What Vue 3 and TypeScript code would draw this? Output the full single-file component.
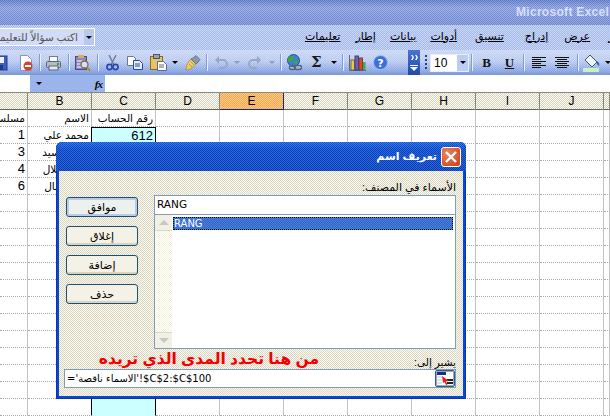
<script setup lang="ts">
const columns: string[] = ['', 'B', 'C', 'D', 'E', 'F', 'G', 'H', 'I', 'J', '']
const rows: { a: string; b: string; c: string }[] = [
  { a: 'مسلسل', b: 'الاسم', c: 'رقم الحساب' },
  { a: '1', b: 'محمد علي', c: '612' },
  { a: '3', b: 'أمين السيد', c: '' },
  { a: '4', b: 'محمد هلال', c: '' },
  { a: '6', b: 'علي جمال', c: '' },
  ...Array.from({ length: 14 }, () => ({ a: '', b: '', c: '' }))
]
const menus: { text: string; cls: string }[] = [
  { text: 'تعليمات', cls: 'm1' },
  { text: 'إطار', cls: 'm2' },
  { text: 'بيانات', cls: 'm3' },
  { text: 'أدوات', cls: 'm4' },
  { text: 'تنسيق', cls: 'm5' },
  { text: 'إدراج', cls: 'm6' },
  { text: 'عرض', cls: 'm7' },
  { text: 'تحرير', cls: 'm8' }
]
const buttons: { text: string; primary: boolean }[] = [
  { text: 'موافق', primary: true },
  { text: 'إغلاق', primary: false },
  { text: 'إضافة', primary: false },
  { text: 'حذف', primary: false }
]
</script>

<template>
  <div class="screen">
    <div class="titlebar"><span class="apptitle">Microsoft Excel</span></div>

    <div class="menubar">
      <div class="ask">
        <span class="ask-text">اكتب سؤالاً للتعليمات</span>
        <span class="ask-drop"><i class="tri"></i></span>
      </div>
      <span v-for="m in menus" :key="m.text" class="menu" :class="m.cls">{{ m.text }}</span>
    </div>

    <div class="toolbar">
      <svg class="ic save" width="16" height="16" viewBox="0 0 16 16"><rect x="1" y="1" width="14" height="14" fill="#3a5fc0" stroke="#223a80"/><rect x="4" y="2" width="8" height="6" fill="#eef"/><rect x="5" y="10" width="6" height="5" fill="#223a80"/></svg>
      <svg class="ic preview" width="14" height="18" viewBox="0 0 14 18"><path d="M1.500 1.500h7l4 4v11h-11z" fill="#fff" stroke="#8a94b0"/><circle cx="9" cy="12" r="4.500" fill="#d8402a"/><rect x="6" y="11" width="6" height="2" fill="#fff"/></svg>
      <i class="sep s1"></i>
      <svg class="ic print" width="15" height="16" viewBox="0 0 15 16"><rect x="3.500" y="1.500" width="8" height="5" fill="#fff" stroke="#707a90"/><rect x=".5" y="6.500" width="14" height="6" rx="1" fill="#b4bcc8" stroke="#5a6478"/><rect x="3" y="11" width="9" height="4" fill="#e6e8ee" stroke="#5a6478"/><rect x="11" y="8" width="2" height="2" fill="#2ab030"/></svg>
      <i class="sep s2"></i>
      <svg class="ic search" width="16" height="18" viewBox="0 0 16 18"><rect x=".5" y="2.500" width="11" height="13" fill="#8d84c4" stroke="#4c4a80"/><rect x="3" y="1" width="6" height="3" fill="#d8b048"/><path d="M2 7h8M2 10h5M2 13h5" stroke="#fff"/><circle cx="9.500" cy="10.500" r="3.500" fill="#cfe4f8" stroke="#7a6a40" stroke-width="1.300"/><path d="M12 13l3 4" stroke="#b08828" stroke-width="2"/></svg>
      <i class="sep s3"></i>
      <svg class="ic cut" width="13" height="17" viewBox="0 0 13 17"><path d="M3 1l5 10M10 1L5 11" stroke="#6f7f98" stroke-width="1.500" fill="none"/><circle cx="3.500" cy="13" r="2.600" fill="none" stroke="#2848a8" stroke-width="1.600"/><circle cx="9.500" cy="13" r="2.600" fill="none" stroke="#2848a8" stroke-width="1.600"/></svg>
      <svg class="ic copy" width="16" height="14" viewBox="0 0 16 14"><path d="M.5.500h6l2 2v7h-8z" fill="#fff" stroke="#6a7898"/><path d="M6.500 4.500h6l3 3v6h-9z" fill="#e8eefc" stroke="#2848a8"/><path d="M8 8h5M8 10h5" stroke="#2848a8"/></svg>
      <svg class="ic paste" width="18" height="17" viewBox="0 0 18 17"><rect x=".5" y="2.500" width="12" height="13" fill="#e8c468" stroke="#8a6a20"/><rect x="3.500" y=".5" width="6" height="4" fill="#9aa4b8" stroke="#555"/><path d="M7.500 7.500h6l3 3v6h-9z" fill="#fff" stroke="#5a6a8a"/><path d="M9 11h5M9 13h5" stroke="#5a6a8a"/></svg>
      <i class="tri t-paste"></i>
      <svg class="ic brush" width="16" height="16" viewBox="0 0 16 16"><path d="M1 15C1 10 3 7 6 4l5 5c-3 3-6 6-10 6z" fill="#eccb68" stroke="#a88428" stroke-width=".7"/><path d="M4 9l3 3M6 7l3 3" stroke="#a88428" stroke-width=".7"/><path d="M8 3l3-2.500 4 4L12.500 8 11 9 6 4z" fill="#8a98b0" stroke="#566" stroke-width=".7"/></svg>
      <i class="sep s4"></i>
      <svg class="ic undo" width="14" height="14" viewBox="0 0 14 14"><path d="M3 4h6a3.500 3.500 0 0 1 0 8H5" fill="none" stroke="#98a8c4" stroke-width="2"/><path d="M5 0v8L1 4z" fill="#98a8c4"/></svg>
      <i class="tri dim t-undo"></i>
      <svg class="ic redo" width="14" height="14" viewBox="0 0 14 14"><path d="M11 4H5a3.500 3.500 0 0 0 0 8h4" fill="none" stroke="#98a8c4" stroke-width="2"/><path d="M9 0v8l4-4z" fill="#98a8c4"/></svg>
      <i class="tri dim t-redo"></i>
      <i class="sep s5"></i>
      <svg class="ic globe" width="17" height="17" viewBox="0 0 17 17"><circle cx="7.500" cy="6.500" r="6" fill="#3f7ed8" stroke="#24509c"/><path d="M3 3c2-2 4-1 5 0s0 3-2 3-1 3-3 2-1-4 0-5zM9 7c2-1 4 0 3 2s-2 2-3 1z" fill="#3ca83c"/><rect x="3.500" y="11.500" width="6" height="4" rx="2" fill="none" stroke="#5a6478" stroke-width="1.400"/><rect x="8.500" y="11.500" width="7" height="4" rx="2" fill="none" stroke="#5a6478" stroke-width="1.400"/></svg>
      <span class="sigma">Σ</span>
      <i class="tri t-sigma"></i>
      <i class="sep s6"></i>
      <svg class="ic chart" width="17" height="17" viewBox="0 0 17 17"><path d="M.5 1v15.500H17" fill="none" stroke="#667"/><rect x="2" y="6" width="3.500" height="10" fill="#e8cc50" stroke="#665"/><rect x="6" y="2" width="3.500" height="14" fill="#7c58b8" stroke="#446"/><rect x="10" y="4" width="3.500" height="12" fill="#d84838" stroke="#644"/><rect x="14" y="8" width="2.500" height="8" fill="#48a848"/></svg>
      <svg class="ic help" width="15" height="15" viewBox="0 0 15 15"><circle cx="7.500" cy="7.500" r="7" fill="#3a70d8" stroke="#a8c0ec"/><text x="7.500" y="11.500" text-anchor="middle" class="qm">?</text></svg>
      <div class="gripper">
        <svg width="9" height="5" viewBox="0 0 9 5" class="chev"><path d="M1 0l1.500 2.500L1 5h1.500L4 2.500 2.500 0zM5 0l1.500 2.500L5 5h1.500L8 2.500 6.500 0z" fill="#fff"/></svg>
        <i class="bar"></i><i class="tri white"></i>
      </div>
      <i class="dots"></i>
      <div class="combo"><span class="size">10</span><span class="combo-drop"><i class="tri"></i></span></div>
      <i class="sep s7"></i>
      <span class="fmt bold">B</span>
      <span class="fmt under">U</span>
      <i class="sep s8"></i>
      <svg class="ic al1" width="14" height="11" viewBox="0 0 14 11"><path d="M0 .5h14M0 2.500h9M0 4.500h14M0 6.500h9M0 8.500h14M0 10.500h9" stroke="#111" stroke-width="1"/></svg>
      <svg class="ic al2" width="14" height="11" viewBox="0 0 14 11"><path d="M0 .5h14M2 2.500h10M0 4.500h14M2 6.500h10M0 8.500h14M2 10.500h10" stroke="#111" stroke-width="1"/></svg>
      <i class="sep s9"></i>
      <svg class="ic fill" width="17" height="18" viewBox="0 0 17 18"><path d="M7 1l7 7-5 5-7-7z" fill="#eef2fa" stroke="#456"/><path d="M14 7c2 1 3 3 2 5-2-1-3-3-2-5z" fill="#3068d0"/><rect x="0" y="14" width="16" height="4" fill="#c4f2c4"/></svg>
      <i class="tri t-fill"></i>
    </div>

    <div class="formula">
      <div class="namebox"></div>
      <div class="fxzone"><i class="tri"></i><em class="fx">fx</em></div>
    </div>

    <div class="sheet">
      <div class="head-row">
        <div v-for="(c, i) in columns" :key="i" class="head" :class="{ active: c === 'E' }">{{ c }}</div>
      </div>
      <div v-for="(r, ri) in rows" :key="ri" class="row">
        <div class="cell text" :class="{ num: ri > 0 }">{{ r.a }}</div>
        <div class="cell text">{{ r.b }}</div>
        <div class="cell text" :class="{ cyan: ri > 0, num: ri > 0, first: ri === 1 }">{{ r.c }}</div>
        <div v-for="n in 8" :key="n" class="cell"></div>
      </div>
    </div>

    <div class="dialog">
      <div class="dlg-title">
        <span class="dlg-caption">تعريف اسم</span>
        <span class="close">
          <svg width="14" height="14" viewBox="0 0 14 14"><path d="M2 2l10 10M12 2L2 12" stroke="#fff" stroke-width="2.400"/></svg>
        </span>
      </div>
      <div class="dlg-body">
        <div class="dlg-main">
          <div class="btns">
            <div v-for="b in buttons" :key="b.text" class="btn" :class="{ primary: b.primary }">{{ b.text }}</div>
          </div>
          <div class="names">
            <div class="label">الأسماء في المصنف:</div>
            <div class="input">RANG</div>
            <div class="list">
              <div class="scroll">
                <span class="sbtn"><i class="up"></i></span>
                <span class="sbtn down"><i class="dn"></i></span>
              </div>
              <div class="items"><div class="selected">RANG</div></div>
            </div>
          </div>
        </div>
        <div class="ref-row">
          <span class="note">من هنا تحدد المدى الذي تريده</span>
          <span class="ref-label">يشير إلى:</span>
        </div>
        <div class="ref-input">
          <span class="ref-text">='الاسماء ناقصة'!$C$2:$C$100</span>
          <span class="ref-btn">
            <svg width="18" height="15" viewBox="0 0 18 15"><rect x=".5" y=".5" width="17" height="14" fill="#fff" stroke="#9ab"/><rect x="1" y="1" width="9" height="3" fill="#1c2c88"/><path d="M1 6h6M1 9h5M1 12h5" stroke="#b8c4d8"/><path d="M11 9h6M11 12h6" stroke="#222" stroke-width="2"/><path d="M6 5l7 5-3 .5 1.500 3-1.500.5-1.500-3L7 12z" fill="#e02020"/></svg>
          </span>
        </div>
      </div>
    </div>
  </div>
</template>

<style>
html, body { margin: 0; background: #fff; }
</style>

<style scoped>
.screen {
  position: relative;
  width: 610px;
  height: 416px;
  overflow: hidden;
  background: #fff;
  font-family: "Liberation Sans", "DejaVu Sans", sans-serif;
  font-size: 12px;
  color: #000;
}
i { display: block; font-style: normal; flex: none; }
.titlebar {
  height: 25px;
  box-sizing: border-box;
  padding: 5px 0 0 516px;
  white-space: nowrap;
  overflow: hidden;
  background:
    repeating-conic-gradient(rgba(255, 255, 255, .16) 0 25%, rgba(0, 0, 60, .1) 0 50%) 0 0 / 2px 2px,
    linear-gradient(180deg, #6484d2 0, #8ea4e6 30%, #8298e0 80%, #7a94dc 100%);
}
.apptitle {
  font: bold 12px/14px "Liberation Sans", sans-serif;
  color: #d6e0f8;
  letter-spacing: .3px;
}
.menubar {
  position: relative;
  height: 25px;
  display: flex;
  align-items: center;
  overflow: hidden;
  background:
    repeating-conic-gradient(#c8d4f8 0 25%, #a8bcec 0 50%) 0 0 / 2px 2px;
}
.ask {
  width: 95px;
  height: 18px;
  flex: none;
  box-sizing: border-box;
  background: #d2dcf6;
  border: 1px solid #fff;
  border-left: 0;
  display: flex;
  justify-content: flex-end;
  align-items: center;
  overflow: hidden;
  margin-top: -1px;
}
.ask-text {
  direction: rtl;
  white-space: nowrap;
  font-size: 10.500px;
  color: #555;
  margin-right: 6px;
  flex: none;
}
.ask-drop {
  width: 10px;
  height: 16px;
  background: #b8c8f0;
  display: flex;
  align-items: center;
  justify-content: center;
  flex: none;
}
.tri {
  width: 0;
  height: 0;
  border: 3px solid transparent;
  border-top: 3px solid #000;
  border-bottom: 0;
}
.tri.dim { border-top-color: #8a9cc0; }
.tri.white { border-top-color: #fff; border-left-width: 4px; border-right-width: 4px; border-top-width: 4px; }
.menu {
  font-size: 11px;
  direction: rtl;
  white-space: nowrap;
  text-decoration: underline;
  text-decoration-thickness: 1px;
  text-underline-offset: 1px;
  flex: none;
  margin-top: -3px;
}
.m1 { margin-left: 210px; }
.m2 { margin-left: 15px; }
.m3 { margin-left: 14px; }
.m4 { margin-left: 14px; }
.m5 { margin-left: 18px; }
.m6 { margin-left: 21px; }
.m7 { margin-left: 16px; }
.m8 { margin-left: 18px; }

.toolbar {
  height: 25px;
  display: flex;
  align-items: center;
  overflow: hidden;
  background:
    repeating-conic-gradient(rgba(255, 255, 255, .1) 0 25%, rgba(0, 0, 60, .04) 0 50%) 0 0 / 2px 2px,
    linear-gradient(180deg, #d0dcf8 0, #c0d0f4 45%, #8eaae6 85%, #7292da 100%);
}
.ic { flex: none; }
.save { margin-left: -8px; }
.preview { margin-left: 11px; }
.sep { width: 1px; height: 17px; background: #7f9bd8; border-right: 1px solid #e8eefc; }
.s1 { margin-left: 6px; }
.print { margin-left: 5px; }
.s2 { margin-left: 7px; }
.search { margin-left: 5px; }
.s3 { margin-left: 6px; }
.cut { margin-left: 7px; }
.copy { margin-left: 8px; }
.paste { margin-left: 7px; }
.t-paste { margin-left: 4px; }
.brush { margin-left: 7px; }
.s4 { margin-left: 5px; }
.undo { margin-left: 6px; }
.t-undo { margin-left: 6px; }
.redo { margin-left: 8px; }
.t-redo { margin-left: 7px; }
.s5 { margin-left: 5px; }
.globe { margin-left: 4px; }
.sigma {
  width: 11px;
  margin-left: 8px;
  flex: none;
  font: bold 15px/15px "DejaVu Serif", serif;
  color: #1a1a2a;
}
.t-sigma { margin-left: 9px; }
.s6 { margin-left: 5px; }
.chart { margin-left: 5px; }
.help { margin-left: 7px; }
.qm { font: bold 11px "DejaVu Sans", sans-serif; fill: #fff; }
.gripper {
  width: 12px;
  height: 25px;
  margin-left: 20px;
  flex: none;
  box-sizing: border-box;
  padding-top: 5px;
  background: linear-gradient(180deg, #4a74d4, #1f4aa8);
  display: flex;
  flex-direction: column;
  align-items: center;
  color: #fff;
}
.chev { flex: none; margin-bottom: 5px; }
.bar { width: 8px; height: 1px; background: #fff; margin-bottom: 1px; }
.dots {
  width: 2px;
  height: 15px;
  margin-left: 5px;
  background: repeating-linear-gradient(180deg, #24408c 0 2px, transparent 2px 4px);
}
.combo {
  width: 39px;
  height: 18px;
  margin-left: 3px;
  flex: none;
  box-sizing: border-box;
  background: #fff;
  border: 1px solid #e6ecfc;
  display: flex;
  align-items: center;
  justify-content: space-between;
}
.size { font: 12px "Liberation Sans", sans-serif; padding-left: 3px; }
.combo-drop {
  width: 11px;
  height: 16px;
  background: #bccdf4;
  display: flex;
  align-items: center;
  justify-content: center;
}
.s7 { margin-left: 2px; }
.fmt { width: 11px; flex: none; font: bold 13px "Liberation Serif", serif; text-align: center; color: #111; }
.bold { margin-left: 8px; }
.under { margin-left: 12px; text-decoration: underline; }
.s8 { margin-left: 8px; }
.al1 { margin-left: 7px; }
.al2 { margin-left: 9px; }
.s9 { margin-left: 8px; }
.fill { margin-left: 4px; }
.t-fill { margin-left: 5px; }

.formula {
  height: 18px;
  box-sizing: border-box;
  display: flex;
  background: #fff;
  border-bottom: 1px solid #8a8a80;
}
.namebox { width: 30px; flex: none; }
.fxzone {
  width: 75px;
  flex: none;
  background: #9cb4ec;
  display: flex;
  align-items: center;
  justify-content: space-between;
  box-sizing: border-box;
  padding: 0 3px 0 6px;
}
.fx { font: italic bold 11px "Liberation Serif", serif; letter-spacing: -1px; }

.head-row, .row {
  display: grid;
  grid-template-columns: 28px repeat(9, 64px) 6px;
}
.head {
  height: 17px;
  box-sizing: border-box;
  border-right: 1px solid #8a8a78;
  border-bottom: 1px solid #66665a;
  background: repeating-conic-gradient(#fff 0 25%, #d8d0b4 0 50%) 0 0 / 2px 2px;
  font: 12px/16px "Liberation Sans", sans-serif;
  text-align: center;
}
.head.active {
  background: repeating-conic-gradient(#ffc880 0 25%, #f8a850 0 50%) 0 0 / 2px 2px;
  border-right-color: #14286c;
  border-bottom-color: #14286c;
}
.cell {
  height: 17px;
  box-sizing: border-box;
  border-right: 1px solid #c4c4c4;
  border-bottom: 1px dotted #aaa;
  overflow: hidden;
  white-space: nowrap;
}
.text {
  font-size: 11px;
  line-height: 16px;
  text-align: right;
  padding-right: 2px;
  display: flex;
  justify-content: flex-end;
}
.num { font-size: 13px; }
.cell.text:not(.num) { font-size: 10.500px; }
.cyan {
  background: #ccffff;
  border-right: 1px solid #000;
  border-left: 1px solid #000;
  margin-left: -1px;
  border-bottom: 1px solid #ccffff;
}
.cyan.first { border-top: 1px solid #000; line-height: 15px; }

.dialog {
  position: absolute;
  left: 56px;
  top: 142px;
  width: 410px;
  height: 257px;
  box-sizing: border-box;
  display: flex;
  flex-direction: column;
  background: #0a46d8;
  border-radius: 6px 6px 0 0;
  padding: 0 3px 3px;
  box-shadow: inset 0 0 0 1px #0838a8;
}
.dlg-title {
  height: 29px;
  flex: none;
  margin: 0 -3px;
  border-radius: 6px 6px 0 0;
  display: flex;
  justify-content: flex-end;
  align-items: center;
  padding-right: 5px;
  background:
    repeating-conic-gradient(rgba(255, 255, 255, .14) 0 25%, rgba(0, 0, 50, .16) 0 50%) 0 0 / 2px 2px,
    linear-gradient(180deg, #1a68ec 0, #0a50d8 25%, #0848d0 100%);
}
.dlg-caption {
  color: #fff;
  font-weight: bold;
  font-size: 11px;
  direction: rtl;
  margin-right: 4px;
}
.close {
  width: 20px;
  height: 20px;
  box-sizing: border-box;
  border: 1px solid #fff;
  border-radius: 3px;
  background: radial-gradient(circle at 30% 30%, #ec8458, #cc3c18);
  display: flex;
  align-items: center;
  justify-content: center;
}
.dlg-body {
  flex: 1;
  display: flex;
  flex-direction: column;
  min-height: 0;
  box-sizing: border-box;
  padding: 0 7px 7px 5px;
  background: repeating-conic-gradient(#fbfaf0 0 25%, #d9d5c2 0 50%) 0 0 / 2px 2px;
}
.dlg-main { display: flex; flex: none; height: 178px; }
.btns {
  width: 90px;
  flex: none;
  padding-top: 26px;
  box-sizing: border-box;
  display: flex;
  flex-direction: column;
  gap: 9px;
}
.btn {
  width: 72px;
  height: 20px;
  box-sizing: border-box;
  margin-left: 2px;
  border: 1px solid #1c5070;
  border-radius: 3px;
  font-size: 11px;
  line-height: 18px;
  text-align: center;
  background: #f4f2e6;
  box-shadow: inset 0 -2px 0 #d8d4c0;
}
.btn.primary {
  box-shadow: inset 0 0 0 2px #b8cce8;
  background: #eef0ee;
}
.names { flex: 1; min-width: 0; display: flex; flex-direction: column; }
.label {
  direction: rtl;
  font-size: 11px;
  line-height: 13px;
  height: 13px;
  margin-top: 10px;
  margin-bottom: 1px;
}
.input {
  height: 19px;
  box-sizing: border-box;
  background: #fff;
  border: 1px solid #7f9db9;
  border-bottom: 0;
  font: 10.500px/17px "DejaVu Sans", sans-serif;
  padding-left: 2px;
  flex: none;
}
.list {
  flex: 1;
  box-sizing: border-box;
  background: #fff;
  border: 1px solid #7f9db9;
  display: flex;
  min-height: 0;
}
.scroll {
  width: 17px;
  flex: none;
  display: flex;
  flex-direction: column;
  justify-content: space-between;
  background: repeating-conic-gradient(#fff 0 25%, #f4f2d8 0 50%) 0 0 / 2px 2px;
}
.sbtn {
  height: 15px;
  display: flex;
  align-items: center;
  justify-content: center;
  background: #f2f0e4;
  border-bottom: 1px solid #d8d8c8;
}
.sbtn.down { border-bottom: 0; border-top: 1px solid #d8d8c8; }
.up, .dn { width: 0; height: 0; border: 5px solid transparent; }
.up { border-bottom: 5px solid #c8c8c0; border-top: 0; }
.dn { border-top: 5px solid #c8c8c0; border-bottom: 0; }
.items { flex: 1; padding: 2px 2px 0 1px; min-width: 0; }
.selected {
  height: 13px;
  box-sizing: border-box;
  outline: 1px dotted #000;
  outline-offset: -1px;
  background: repeating-conic-gradient(#3268c8 0 25%, #4a7cd8 0 50%) 0 0 / 2px 2px;
  color: #fff;
  font: 10px/13px "DejaVu Sans", sans-serif;
  padding-left: 1px;
}
.ref-row {
  height: 20px;
  flex: none;
  display: flex;
  justify-content: flex-end;
  align-items: flex-end;
  direction: ltr;
}
.note {
  direction: rtl;
  color: #f00000;
  font-size: 15.500px;
  font-weight: bold;
  line-height: 20px;
  margin-right: 95px;
  white-space: nowrap;
}
.ref-label { direction: rtl; font-size: 10.500px; line-height: 14px; }
.ref-input {
  width: 392px;
  height: 19px;
  flex: none;
  box-sizing: border-box;
  background: #fff;
  border: 1px solid #7f9db9;
  display: flex;
  justify-content: space-between;
  align-items: center;
  padding-left: 2px;
}
.ref-text { font-size: 10px; font-family: "DejaVu Sans", sans-serif; white-space: nowrap; direction: ltr; }
.ref-btn {
  width: 20px;
  height: 17px;
  box-sizing: border-box;
  border: 1px solid #2c5c98;
  border-radius: 2px;
  background: #d8e4f4;
  display: flex;
  align-items: center;
  justify-content: center;
}
</style>
